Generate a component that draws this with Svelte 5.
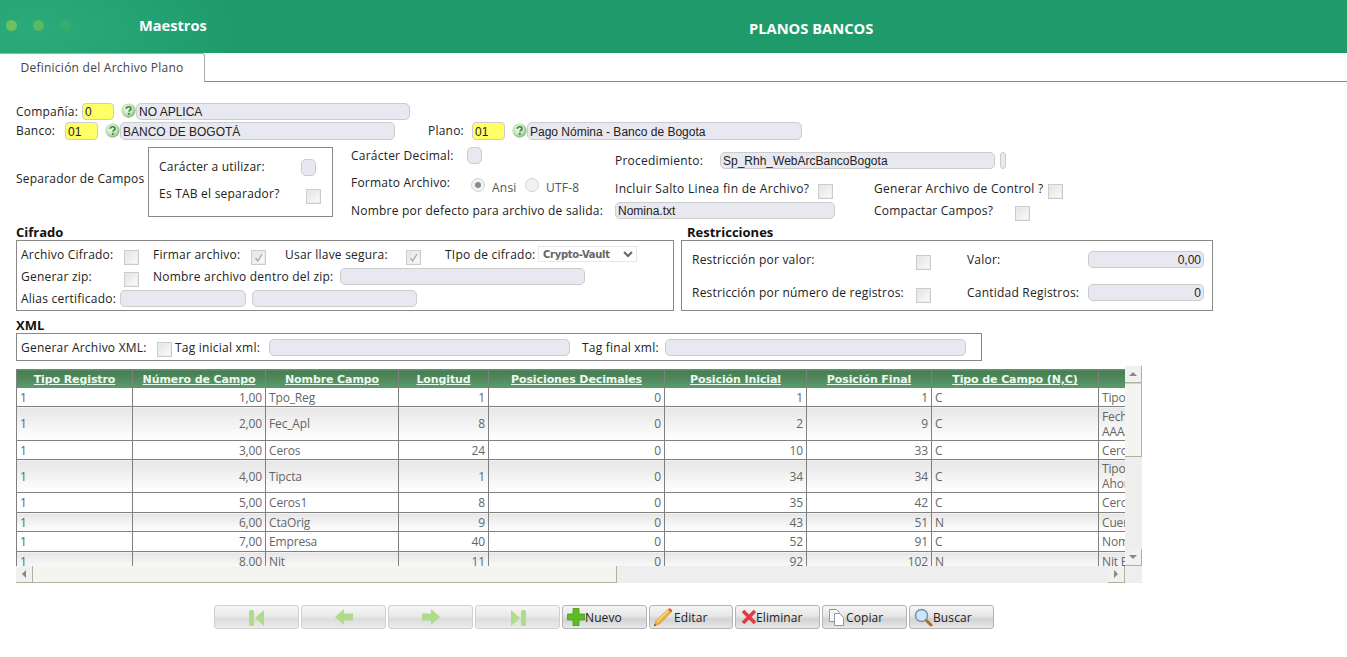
<script>
  const cols = [
    ['Tipo Registro', 116], ['Número de Campo', 133], ['Nombre Campo', 133], ['Longitud', 90],
    ['Posiciones Decimales', 176], ['Posición Inicial', 142], ['Posición Final', 125],
    ['Tipo de Campo (N,C)', 167], ['', 200]
  ];
  const rows = [
    { h: 19, n: '1,00', name: 'Tpo_Reg', len: 1, dec: 0, ini: 1, fin: 1, t: 'C', d: ['Tipo de Registro'] },
    { h: 34, n: '2,00', name: 'Fec_Apl', len: 8, dec: 0, ini: 2, fin: 9, t: 'C', d: ['Fecha Aplicación', 'AAAAMMDD'] },
    { h: 19, n: '3,00', name: 'Ceros', len: 24, dec: 0, ini: 10, fin: 33, t: 'C', d: ['Ceros'] },
    { h: 33, n: '4,00', name: 'Tipcta', len: 1, dec: 0, ini: 34, fin: 34, t: 'C', d: ['Tipo de Cuenta', 'Ahorros'] },
    { h: 20, n: '5,00', name: 'Ceros1', len: 8, dec: 0, ini: 35, fin: 42, t: 'C', d: ['Ceros'] },
    { h: 19, n: '6,00', name: 'CtaOrig', len: 9, dec: 0, ini: 43, fin: 51, t: 'N', d: ['Cuenta Origen'] },
    { h: 20, n: '7,00', name: 'Empresa', len: 40, dec: 0, ini: 52, fin: 91, t: 'C', d: ['Nombre Empresa'] },
    { h: 19, n: '8,00', name: 'Nit', len: 11, dec: 0, ini: 92, fin: 102, t: 'N', d: ['Nit Empresa'] }
  ];
</script>

{#snippet check(on = false)}
  <span class="chk">
    {#if on}
      <svg viewBox="0 0 15 15" width="15" height="15"><path d="M4.500 8l2.200 3L11 4" fill="none" stroke="#a9a9a9" stroke-width="1.300" /></svg>
    {/if}
  </span>
{/snippet}

{#snippet help()}
  <svg class="help" viewBox="0 0 16 16" width="15" height="15">
    <defs>
      <radialGradient id="hg" cx="42%" cy="40%" r="65%">
        <stop offset="0" stop-color="#f2f9ee" />
        <stop offset=".6" stop-color="#c4e0ba" />
        <stop offset="1" stop-color="#6fb06c" />
      </radialGradient>
    </defs>
    <circle cx="8" cy="8" r="7.600" fill="url(#hg)" />
    <path d="M5.600 6.200c.2-1.600 1.400-2.300 2.700-2.200 1.500.1 2.400 1 2.300 2.200-.1 1.300-1.900 1.600-2.200 3" fill="none" stroke="#3b8a3c" stroke-width="1.800" />
    <circle cx="8.300" cy="11.600" r="1.100" fill="#3b8a3c" />
  </svg>
{/snippet}

{#snippet btnbar(label, icon, disabled)}
  <button class="btn" class:off={disabled} type="button">
    {@render icon()}{#if label}<span>{label}</span>{/if}
  </button>
{/snippet}

{#snippet iFirst()}
  <svg viewBox="0 0 20 20" width="20" height="20"><rect x="2" y="3" width="5" height="16" rx="1.500" fill="#aedc8a" /><path d="M8 11l9-8v16z" fill="#aedc8a" /></svg>
{/snippet}
{#snippet iPrev()}
  <svg viewBox="0 0 20 20" width="20" height="20"><path d="M1 10l9-8v4.500h9v7h-9V18z" fill="#aedc8a" /></svg>
{/snippet}
{#snippet iNext()}
  <svg viewBox="0 0 20 20" width="20" height="20"><path d="M19 10l-9-8v4.500H1v7h9V18z" fill="#aedc8a" /></svg>
{/snippet}
{#snippet iLast()}
  <svg viewBox="0 0 20 20" width="20" height="20"><rect x="13" y="3" width="5" height="16" rx="1.500" fill="#aedc8a" /><path d="M12 11L3 3v16z" fill="#aedc8a" /></svg>
{/snippet}
{#snippet iPlus()}
  <svg class="tuck" viewBox="0 0 20 20" width="20" height="20"><path d="M7 1.500h6v5.500h5.500v6H13v5.500H7V13H1.500V7H7z" fill="#5fbb20" stroke="#4a9a1c" stroke-width=".8" /></svg>
{/snippet}
{#snippet iPencil()}
  <svg class="pad" viewBox="0 0 20 20" width="20" height="20">
    <path d="M1 19l2-5.500L15 2.500l3 3L6.500 17z" fill="#f0b040" stroke="#c98f30" stroke-width=".6" />
    <path d="M4 14.500L15.500 3.500" stroke="#fbe08a" stroke-width="1.200" />
    <path d="M15 2.500l3 3 1-1.200c.3-.4.200-.9-.1-1.200l-1.600-1.600c-.3-.3-.8-.3-1.100 0z" fill="#e0563f" />
    <path d="M1 19l.8-2.200 1.400 1.400z" fill="#5a3d20" />
  </svg>
{/snippet}
{#snippet iX()}
  <svg viewBox="0 0 17 20" width="17" height="20"><path d="M4 4l12 12M16 4L4 16" stroke="#e63a42" stroke-width="3.600" /></svg>
{/snippet}
{#snippet iCopy()}
  <svg viewBox="0 0 20 20" width="20" height="20"><path d="M3.500 2.500h7l3 3v9h-10z" fill="#f7f7f7" stroke="#8d9aa0" /><path d="M8.500 6.500h5l4 4v8h-9z" fill="#fff" stroke="#8d9aa0" /></svg>
{/snippet}
{#snippet iSearch()}
  <svg viewBox="0 0 20 20" width="20" height="20"><path d="M12 12l6 6" stroke="#a8702c" stroke-width="3" stroke-linecap="round" /><circle cx="8.500" cy="8.500" r="6" fill="#cfe6f7" stroke="#6f93b5" stroke-width="1.500" /></svg>
{/snippet}

<div class="page">
  <header class="top">
    <div class="dots"><i></i><i></i><i></i></div>
    <div class="crumb">Maestros</div>
    <div class="title">PLANOS BANCOS</div>
  </header>

  <nav class="tabs"><div class="tab">Definición del Archivo Plano</div></nav>

  <main class="form">
    <div class="r r1">
      <label class="w66">Compañía:</label>
      <input class="key w32" value="0" />
      {@render help()}
      <input class="txt w274" value="NO APLICA" />
    </div>
    <div class="r r2">
      <label class="w49">Banco:</label>
      <input class="key w33" value="01" />
      {@render help()}
      <input class="txt w275" value="BANCO DE BOGOTÁ" />
      <label class="plano">Plano:</label>
      <input class="key w33" value="01" />
      {@render help()}
      <input class="txt w275" value="Pago Nómina - Banco de Bogota" />
    </div>

    <section class="sep">
      <label class="seplabel">Separador de Campos</label>
      <div class="box sepbox">
        <div class="seprow a"><label>Carácter a utilizar:</label><input class="txt w15" /></div>
        <div class="seprow b"><label>Es TAB el separador?</label>{@render check()}</div>
      </div>
      <div class="opts">
        <div class="optrow oa">
          <div class="c1"><label class="l116">Carácter Decimal:</label><input class="txt w15" /></div>
          <div class="c2">
            <label class="l105">Procedimiento:</label>
            <input class="txt w275" value="Sp_Rhh_WebArcBancoBogota" />
            <input class="txt w6" />
          </div>
        </div>
        <div class="optrow ob">
          <div class="c1">
            <label class="l116">Formato Archivo:</label>
            <span class="radio on"></span><span class="rl ansi">Ansi</span>
            <span class="radio"></span><span class="rl">UTF-8</span>
          </div>
          <div class="c2 w259"><label class="l203">Incluir Salto Linea fin de Archivo?</label>{@render check()}</div>
          <div class="c3"><label class="l174">Generar Archivo de Control ?</label>{@render check()}</div>
        </div>
        <div class="optrow oc">
          <div class="c1"><label>Nombre por defecto para archivo de salida:</label></div>
          <div class="c2 w259"><input class="txt w220" value="Nomina.txt" /></div>
          <div class="c3"><label class="l141">Compactar Campos?</label>{@render check()}</div>
        </div>
      </div>
    </section>

    <section class="mid">
      <div class="cif">
        <h3>Cifrado</h3>
        <div class="box cifbox">
          <div class="fr f1">
            <label class="l103">Archivo Cifrado:</label>{@render check()}
            <label class="l98 ml14">Firmar archivo:</label>{@render check(true)}
            <label class="l121 ml19">Usar llave segura:</label>{@render check(true)}
            <label class="l93 ml24">TIpo de cifrado:</label>
            <select class="sel"><option>Crypto-Vault</option></select>
          </div>
          <div class="fr f2">
            <label class="l103">Generar zip:</label>{@render check()}
            <label class="l187 ml14">Nombre archivo dentro del zip:</label>
            <input class="txt w245" />
          </div>
          <div class="fr f3">
            <label class="l99">Alias certificado:</label>
            <input class="txt w126" />
            <input class="txt w165 ml6" />
          </div>
        </div>
      </div>
      <div class="res">
        <h3>Restricciones</h3>
        <div class="box resbox">
          <div class="fr g1">
            <label class="l224">Restricción por valor:</label>{@render check()}
            <label class="l121 ml36">Valor:</label>
            <input class="txt w116 num" value="0,00" />
          </div>
          <div class="fr g2">
            <label class="l224">Restricción por número de registros:</label>{@render check()}
            <label class="l121 ml36">Cantidad Registros:</label>
            <input class="txt w116 num" value="0" />
          </div>
        </div>
      </div>
    </section>

    <section class="xml">
      <h3>XML</h3>
      <div class="box xmlbox">
        <label class="l136">Generar Archivo XML:</label>{@render check()}
        <label class="l94 ml3">Tag inicial xml:</label>
        <input class="txt w301" />
        <label class="l83 ml12">Tag final xml:</label>
        <input class="txt w301" />
      </div>
    </section>

    <section class="grid">
      <div class="view">
        <table>
          <colgroup>
            {#each cols as c}<col style="width:{c[1]}px" />{/each}
          </colgroup>
          <thead>
            <tr>{#each cols as c}<th><a href="#top">{c[0]}</a></th>{/each}</tr>
          </thead>
          <tbody>
            {#each rows as r, i}
              <tr class:alt={i % 2 === 1} style="height:{r.h}px">
                <td>1</td>
                <td class="rt">{r.n}</td>
                <td>{r.name}</td>
                <td class="rt">{r.len}</td>
                <td class="rt">{r.dec}</td>
                <td class="rt">{r.ini}</td>
                <td class="rt">{r.fin}</td>
                <td>{r.t}</td>
                <td>{#each r.d as l, k}{#if k}<br />{/if}{l}{/each}</td>
              </tr>
            {/each}
          </tbody>
        </table>
      </div>
      <div class="vbar">
        <div class="sb-btn v"><span class="tri up"></span></div>
        <div class="sb-thumb-v"></div>
        <div class="sb-space"></div>
        <div class="sb-btn v"><span class="tri down"></span></div>
      </div>
      <div class="hbar">
        <div class="sb-btn h"><span class="tri left"></span></div>
        <div class="sb-thumb-h"></div>
        <div class="sb-space"></div>
        <div class="sb-btn h"><span class="tri right"></span></div>
      </div>
      <div class="corner"></div>
    </section>

    <section class="bar">
      {@render btnbar('', iFirst, true)}
      {@render btnbar('', iPrev, true)}
      {@render btnbar('', iNext, true)}
      {@render btnbar('', iLast, true)}
      {@render btnbar('Nuevo', iPlus, false)}
      {@render btnbar('Editar', iPencil, false)}
      {@render btnbar('Eliminar', iX, false)}
      {@render btnbar('Copiar', iCopy, false)}
      {@render btnbar('Buscar', iSearch, false)}
    </section>
  </main>
</div>

<style>
  :global(body) { margin: 0; background: #fff; }
  .page { width: 1347px; height: 657px; overflow: hidden; font: 12px "DejaVu Sans", sans-serif; color: #222; }
  label, .rl { font-family: "Open Sans", sans-serif; font-size: 12px; letter-spacing: .22px; color: #222; white-space: nowrap; }

  .top { height: 53px; display: flex; align-items: center; position: relative;
    background: radial-gradient(ellipse 210px 90px at 30px 30px, #2cab7a, rgba(44,171,122,0) 100%), #1f9b6b; color: #fff; }
  .dots { display: flex; gap: 16px; margin-left: 6px; width: 133px; flex: none; margin-top: -3px; }
  .dots i { width: 11px; height: 11px; border-radius: 50%; background: #6fc05a; }
  .dots i:nth-child(2) { background: #57bb62; }
  .dots i:nth-child(3) { background: #35ad6c; }
  .crumb { font: 700 14.600px "Open Sans", sans-serif; margin-top: -3px; width: 610px; flex: none; }
  .title { font: 700 14.700px "Open Sans", sans-serif; margin-top: 2px; }

  .tabs { height: 28px; border-bottom: 1px solid #888; }
  .tab { width: 205px; height: 29px; box-sizing: border-box; border: 1px solid #aaa; border-bottom: 0; border-left: 0; border-radius: 0 3px 0 0;
    background: #fff; text-align: center;
    font: 12px/28px "Open Sans", sans-serif; letter-spacing: .25px; color: #444; }

  .form { padding: 21px 0 0 16px; }
  .r { display: flex; align-items: center; }
  .r1 { height: 17px; }
  .r2 { height: 18px; margin-top: 2px; }
  .r2 label { margin-top: -2px; }
  .w66 { width: 66px; } .w49 { width: 49px; }
  input { box-sizing: border-box; font: 12px "Liberation Sans", sans-serif; color: #222; padding: 1px 2px 0; margin: 0; outline: 0; }
  .key { height: 17px; background: #ffff66; border: 1px solid #ccc; border-radius: 4px; }
  .txt { height: 17px; background: #e8e8f0; border: 1px solid #ccc; border-radius: 5px; }
  .r2 input { height: 18px; }
  .w32 { width: 32px; } .w33 { width: 33px; }
  .w274 { width: 274px; } .w275 { width: 275px; } .w15 { width: 15px; padding: 0; } .w6 { width: 6px; padding: 0; margin-left: 5px; }
  .w220 { width: 220px; } .w245 { width: 245px; } .w126 { width: 126px; } .w165 { width: 165px; } .w116 { width: 116px; } .w301 { width: 301px; }
  .help { flex: none; margin: -2px 0 0 7px; }
  .plano { margin-left: 33px; width: 44px; }

  .chk { display: inline-flex; flex: none; width: 15px; height: 15px; box-sizing: border-box; border: 1px solid #cbcbcb; background: linear-gradient(135deg, #e2e2e2, #fcfcfc); box-shadow: inset 0 0 0 1px #ececec; }
  .chk svg { margin: -1px; }

  .box { border: 1px solid #888; box-sizing: border-box; }

  .sep { display: flex; margin-top: 7px; height: 72px; }
  .seplabel { width: 132px; margin-top: 23px; flex: none; }
  .sepbox { width: 185px; height: 70px; flex: none; padding: 10px 0 0 10px; }
  .seprow { display: flex; align-items: center; justify-content: space-between; height: 18px; }
  .seprow label { margin-top: -2px; }
  .seprow.a { padding-right: 16px; }
  .seprow.a input { height: 17px; }
  .seprow.b { padding-right: 11px; margin-top: 9px; }
  .seprow.b .chk { margin-top: 5px; }

  .opts { margin-left: 18px; flex: none; }
  .optrow { display: flex; }
  .c1 { width: 264px; flex: none; display: flex; align-items: flex-start; }
  .c2, .c3 { display: flex; align-items: flex-start; }
  .w259 { width: 259px; flex: none; }
  .l116 { width: 116px; }
  .l105 { width: 105px; } .l203 { width: 203px; } .l174 { width: 174px; } .l141 { width: 141px; }
  .oa { height: 17px; }
  .oa .c2 > * { margin-top: 5px; }
  .ob { margin-top: 11px; height: 18px; }
  .ob .c1 label { margin-top: -1px; }
  .ob .c2 label, .ob .c3 label { margin-top: 5px; letter-spacing: .3px; }
  .ob .chk { margin-top: 9px; }
  .ob .rl { margin-top: 4px; }
  .oc { margin-top: 9px; height: 17px; }
  .oc .chk { margin-top: 4px; }
  .radio { width: 14px; height: 14px; border-radius: 50%; box-sizing: border-box; border: 1px solid #d4d4d4; background: #f2f2f2; flex: none; position: relative; margin: 3px 0 0 4px; }
  .radio.on::after { content: ""; position: absolute; inset: 3px; background: #8a8a8a; border-radius: 50%; }
  .rl { color: #555; margin-left: 7px; }
  .ansi { width: 26px; margin-right: 3px; }

  .mid { display: flex; margin-top: 7px; }
  h3 { margin: 0; font: 700 13px "Open Sans", sans-serif; color: #111; height: 14px; line-height: 12px; }
  .cif { width: 658px; flex: none; }
  .cifbox { height: 71px; padding: 0 4px; }
  .res { margin-left: 7px; width: 532px; flex: none; }
  .res h3 { margin-left: 6px; }
  .resbox { height: 71px; padding: 0 0 0 10px; }
  .fr { display: flex; align-items: center; }
  .f1, .f2, .f3 { height: 17px; margin-top: 5px; }
  .l103 { width: 103px; } .l99 { width: 99px; } .l98 { width: 98px; } .l121 { width: 121px; } .l93 { width: 93px; } .l187 { width: 187px; }
  .l224 { width: 224px; } .l136 { width: 136px; } .l94 { width: 94px; } .l83 { width: 83px; }
  .ml14 { margin-left: 14px; } .ml19 { margin-left: 19px; } .ml24 { margin-left: 24px; } .ml6 { margin-left: 6px; }
  .ml36 { margin-left: 36px; } .ml3 { margin-left: 3px; } .ml12 { margin-left: 12px; }
  .f1 .chk, .f2 .chk { margin-top: 6px; }
  .sel { width: 99px; height: 16px; font: 700 10px "DejaVu Sans", sans-serif; letter-spacing: -.3px; color: #666; border: 1px solid #e8e8e8; background: #fff; padding: 0; margin-top: -1px; }
  .g1 { height: 17px; margin-top: 10px; }
  .g2 { height: 17px; margin-top: 16px; }
  .g1 .chk, .g2 .chk { margin-top: 6px; }
  .num { text-align: right; }

  .xml { margin-top: 8px; }
  .xmlbox { width: 966px; height: 28px; display: flex; align-items: center; padding: 0 4px; }
  .xmlbox .chk { margin-top: 5px; }

  .grid { display: grid; grid-template-columns: 1109px 17px; grid-template-rows: 200px 17px; margin-top: 5px; width: 1126px; }
  .view { overflow: hidden; padding-top: 3px; box-sizing: border-box; }
  table { border-collapse: collapse; table-layout: fixed; width: 1282px; font: 12px "Open Sans", sans-serif; letter-spacing: -.15px; color: #666; }
  th { height: 16px; padding: 0; border: 1px solid #808080; background: linear-gradient(#4a7a52, #4f8a5c 50%, #5a9c6c); }
  th a { font: 700 11px "DejaVu Sans", sans-serif; color: #eefaf0; text-decoration: underline; white-space: nowrap; letter-spacing: -.1px; }
  td { padding: 0 3px; border: 1px solid #808080; line-height: 15px; white-space: nowrap; overflow: hidden; }
  td.rt { text-align: right; }
  tr.alt td { background: linear-gradient(#e6e6e6, #fff); }

  .vbar { display: flex; flex-direction: column; background: #eee; }
  .hbar { display: flex; background: #eee; }
  .corner { background: #eee; }
  .sb-btn { flex: none; width: 17px; height: 17px; box-sizing: border-box; display: flex; align-items: center; justify-content: center; background: #f1f1ef; border-right: 1px solid #a8b49c; border-bottom: 1px solid #a8b49c; }
  .sb-thumb-v { height: 74px; flex: none; box-sizing: border-box; background: #f4f4f1; border-right: 1px solid #a8b49c; border-bottom: 1px solid #a8b49c; border-top: 1px solid #cfd6c8; }
  .sb-thumb-h { width: 584px; flex: none; box-sizing: border-box; background: #f4f4f1; border-right: 1px solid #a8b49c; border-bottom: 1px solid #a8b49c; }
  .sb-space { flex: 1; }
  .tri { width: 0; height: 0; border: 4px solid transparent; }
  .up { border-bottom-color: #888; margin-top: -4px; }
  .down { border-top-color: #888; margin-top: 4px; }
  .left { border-right-color: #888; margin-left: -4px; }
  .right { border-left-color: #888; margin-left: 4px; }

  .bar { display: flex; gap: 2px; margin-top: 22px; margin-left: 198px; }
  .btn { width: 85px; height: 24px; box-sizing: border-box; padding: 0 0 0 3px; display: flex; align-items: center; justify-content: flex-start; border: 1px solid #b4b4b4; border-radius: 3px;
    background: linear-gradient(#f6f6f6, #e6e6e6 45%, #d2d2d2 60%, #e8e8e8); font: 12px "Open Sans", sans-serif; letter-spacing: .1px; color: #222; }
  .btn:nth-child(6) { width: 84px; }
  .btn.off { border-color: #d0d0d0; justify-content: center; padding: 0; background: linear-gradient(#f6f6f6, #eaeaea 45%, #dcdcdc 60%, #ececec); }
  .tuck { margin-right: -1px; }
  .pad { margin-right: 1px; }
</style>
